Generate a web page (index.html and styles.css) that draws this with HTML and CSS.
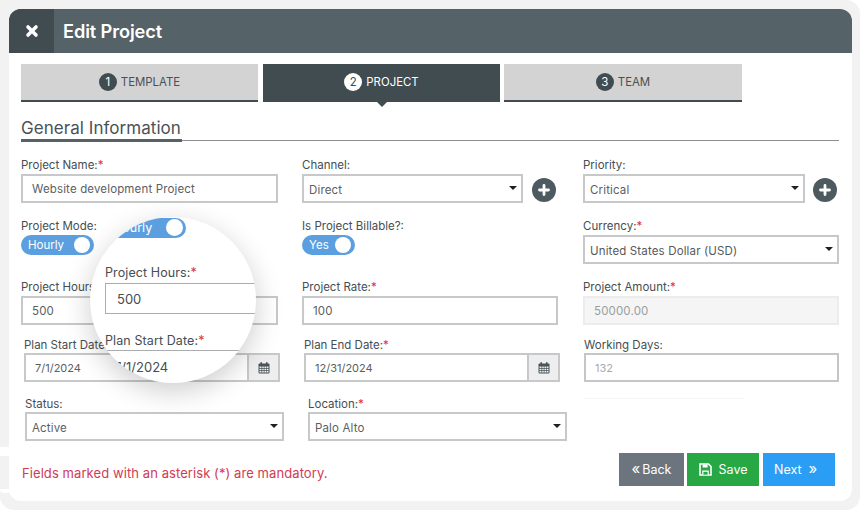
FILE: index.html
```html
<!DOCTYPE html>
<html lang="en">
<head>
<meta charset="utf-8">
<title>Edit Project</title>
<link rel="stylesheet" href="styles.css">
</head>
<body>
<div class="frame">
  <div class="gap gap-a"></div>
  <div class="gap gap-b"></div>
  <main class="card">
    <header class="head">
      <button class="close" type="button" aria-label="Close">
        <svg width="14" height="14" viewBox="0 0 14 14"><path d="M3 3 L11 11 M11 3 L3 11" stroke="#fff" stroke-width="3.6" stroke-linecap="round"/></svg>
      </button>
      <h1 class="title">Edit Project</h1>
    </header>

    <nav class="tabs">
      <div class="tab"><span class="num">1</span>TEMPLATE</div>
      <div class="tab tab-on"><span class="num">2</span>PROJECT</div>
      <div class="tab tab-last"><span class="num">3</span>TEAM</div>
    </nav>

    <h2 class="section"><span>General Information</span></h2>

    <section class="row row-1">
      <div class="f c1"><label class="lbl">Project Name:<i>*</i></label><div class="inp">Website development Project</div></div>
      <div class="f c2"><label class="lbl">Channel:</label>
        <div class="with-add"><div class="inp sel"><b>Direct</b><em class="caret"></em></div><span class="add"><svg width="12" height="12" viewBox="0 0 12 12"><path d="M6 1.5V10.5M1.5 6H10.5" stroke="#fff" stroke-width="2.8" stroke-linecap="round"/></svg></span></div></div>
      <div class="f c3"><label class="lbl">Priority:</label>
        <div class="with-add"><div class="inp sel"><b>Critical</b><em class="caret"></em></div><span class="add"><svg width="12" height="12" viewBox="0 0 12 12"><path d="M6 1.5V10.5M1.5 6H10.5" stroke="#fff" stroke-width="2.8" stroke-linecap="round"/></svg></span></div></div>
    </section>

    <section class="row row-2">
      <div class="f c1"><label class="lbl">Project Mode:</label><div class="toggle t-hourly"><span>Hourly</span><u></u></div></div>
      <div class="f c2"><label class="lbl">Is Project Billable?:</label><div class="toggle t-yes"><span>Yes</span><u></u></div></div>
      <div class="f c3"><label class="lbl">Currency:<i>*</i></label><div class="inp sel full"><b class="dark">United States Dollar (USD)</b><em class="caret"></em></div></div>
    </section>

    <section class="row row-3">
      <div class="f c1"><label class="lbl">Project Hours:<i>*</i></label><div class="inp">500</div></div>
      <div class="f c2w"><label class="lbl">Project Rate:<i>*</i></label><div class="inp">100</div></div>
      <div class="f c3"><label class="lbl">Project Amount:<i>*</i></label><div class="inp off">50000.00</div></div>
    </section>

    <section class="row row-4">
      <div class="f c1d"><label class="lbl">Plan Start Date:<i>*</i></label><div class="date"><div class="inp">7/1/2024</div><span class="cal"><svg width="12" height="12" viewBox="0 0 12 12"><use href="#cal"/></svg></span></div></div>
      <div class="f c2d"><label class="lbl">Plan End Date:<i>*</i></label><div class="date"><div class="inp">12/31/2024</div><span class="cal"><svg width="12" height="12" viewBox="0 0 12 12"><use href="#cal"/></svg></span></div></div>
      <div class="f c3d"><label class="lbl">Working Days:</label><div class="inp ro">132</div><div class="faint"></div></div>
    </section>

    <section class="row row-5">
      <div class="f c1s"><label class="lbl">Status:</label><div class="inp sel full"><b>Active</b><em class="caret"></em></div></div>
      <div class="f c2s"><label class="lbl">Location:<i>*</i></label><div class="inp sel full"><b>Palo Alto</b><em class="caret"></em></div></div>
    </section>

    <footer class="foot">
      <p class="note">Fields marked with an asterisk (*) are mandatory.</p>
      <div class="btns">
        <button class="btn b-back" type="button"><span class="chev">«</span>Back</button>
        <button class="btn b-save" type="button"><svg width="13" height="13" viewBox="0 0 13 13"><path d="M1 1H9.5L12 3.5V12H1Z" fill="none" stroke="#fff" stroke-width="1.6"/><path d="M3.6 1.5H8.6V4.6H3.6Z M3.2 7.6H9.8V11.6H3.2Z" fill="#fff"/><path d="M4.4 8.8H8.6V11.6H4.4Z" fill="#28a745"/></svg>Save</button>
        <button class="btn b-next" type="button">Next<span class="chev">»</span></button>
      </div>
    </footer>
  </main>

  <aside class="lens">
    <div class="lens-toggle"><span>Hourly</span><u></u></div>
    <label class="lens-lbl l1">Project Hours:<i>*</i></label>
    <div class="lens-inp">500</div>
    <label class="lens-lbl l2">Plan Start Date:<i>*</i></label>
    <div class="lens-date">7/1/2024</div>
  </aside>
</div>
<svg width="0" height="0" class="defs"><defs><g id="cal" fill="#4a5459"><rect x="0.5" y="1.5" width="11" height="10" rx="1"/><rect x="2.5" y="0" width="1.5" height="3" rx=".5"/><rect x="8" y="0" width="1.5" height="3" rx=".5"/><path fill="#eeeeee" d="M1.5 4.5h2v1.5h-2zM4.2 4.5h1.6v1.5H4.2zM6.4 4.5H8v1.5H6.4zM8.6 4.5h1.9v1.5H8.6zM1.5 6.8h2v1.5h-2zM4.2 6.8h1.6v1.5H4.2zM6.4 6.8H8v1.5H6.4zM8.6 6.8h1.9v1.5H8.6zM1.5 9h2v1.5h-2zM4.2 9h1.6v1.5H4.2zM6.4 9H8v1.5H6.4zM8.6 9h1.9v1.5H8.6z"/></g></defs></svg>
</body>
</html>
```
FILE: styles.css
```css
* { box-sizing: border-box; }
html, body { margin: 0; padding: 0; background: #fff; }
body { font-family: "Inter", "Liberation Sans", sans-serif; color: #474d52; }
.defs { position: absolute; }
.frame { position: relative; width: 860px; height: 510px; background: #f2f2f2; padding: 9px 8px 9px 9px; border-radius: 0 14px 14px 14px; overflow: hidden; }
.gap { position: absolute; left: 0; width: 9px; background: #fff; }
.gap-a { top: 447px; height: 9px; }
.gap-b { top: 489px; height: 4px; border-bottom-left-radius: 6px; }
.card { position: relative; height: 492px; background: #fff; border-radius: 12px; overflow: hidden; }

.head { display: flex; align-items: center; height: 44px; background: #556268; }
.close { width: 45px; height: 44px; border: 0; padding: 0; display: flex; align-items: center; justify-content: center; background: #414c51; }
.title { margin: 0 0 0 9px; font-size: 18.2px; font-weight: 600; color: #fff; letter-spacing: -.1px; }

.tabs { display: flex; margin: 11px 0 0 12px; height: 38px; width: 721px; gap: 5px; }
.tab { position: relative; flex: 0 0 237px; height: 38px; display: flex; align-items: center; justify-content: center; font-size: 11.4px; color: #4a4f53; background: #d3d3d3; border-bottom: 2px solid #414c51; }
.tab-last { flex-basis: 238px; margin-left: -1px; }
.tab-on { background: #414c51; color: #fff; }
.tab-on::after { content: ""; position: absolute; left: 50%; top: 36px; margin-left: -7px; border: 7px solid transparent; border-top-color: #414c51; border-bottom: 0; }
.num { width: 18px; height: 18px; margin-right: 4px; border-radius: 50%; display: flex; align-items: center; justify-content: center; background: #414c51; color: #fff; font-size: 11.5px; }
.tab-on .num { background: #fff; color: #414c51; }

.section { margin: 17px 13px 0 12px; height: 22px; border-bottom: 1px solid #8c8f91; font-size: 17px; font-weight: 400; line-height: 19px; color: #4a5257; }
.section span { display: inline-block; width: 161px; height: 23px; border-bottom: 3px solid #556268; white-space: nowrap; letter-spacing: .05px; }

.row { display: flex; align-items: flex-start; padding-left: 12px; }
.row-1 { margin-top: 17px; height: 61px; }
.row-2 { height: 61px; }
.row-3 { height: 57px; }
.row-4 { height: 59px; }
.row-5 { height: 40px; }

.f { flex: none; }
.c1 { width: 257px; margin-right: 24px; }
.c2 { width: 254px; margin-right: 27px; }
.c2w { width: 256px; margin-right: 25px; }
.c3 { width: 256px; }
.c1d { width: 256px; margin: 0 24px 0 3px; }
.c2d { width: 256px; margin-right: 24px; }
.c3d { width: 255px; }
.c1s { width: 259px; margin: 0 24px 0 4px; }
.c2s { width: 259px; }

.lbl { display: block; height: 16px; font-size: 11.5px; line-height: 14px; color: #474d52; white-space: nowrap; }
.lbl i { font-style: normal; color: #dc2f4b; }
.row-4 .lbl, .row-5 .lbl { line-height: 16px; }

.inp { height: 29px; border: 2px solid #c6c8ca; background: #fff; padding: 0 9px; display: flex; align-items: center; font-size: 11.5px; letter-spacing: .15px; color: #5b6064; white-space: nowrap; flex: 1; }
.sel { position: relative; padding: 2px 5px 0; }
.sel b { font-weight: 400; }
.sel b.dark { color: #55595c; }
.caret { position: absolute; right: 4px; top: 10px; border: 4px solid transparent; border-top: 4px solid #1d1f21; border-bottom: 0; }
.with-add { display: flex; align-items: center; }
.with-add .inp { flex: 0 0 222px; }
.c2 .with-add .inp { flex-basis: 221px; }
.add { flex: none; width: 24px; height: 24px; margin-left: 8px; border-radius: 50%; background: #4d5a60; display: flex; align-items: center; justify-content: center; position: relative; top: 1px; }
.c2 .add { margin-left: 9px; }
.full { width: 100%; }

.toggle { position: relative; height: 20px; border-radius: 10px; background: #5c9fe0; color: #fff; font-size: 11.5px; line-height: 21px; padding-left: 7px; }
.toggle u { position: absolute; right: 4px; top: 2px; width: 16px; height: 16px; border-radius: 50%; background: #fff; }
.t-hourly { width: 73px; }
.t-yes { width: 53px; }

.off { background: #f5f5f5; border-color: #ececec; color: #9a9ea1; }
.ro { color: #a8abad; border-color: #c4c6c8; font-size: 11px; letter-spacing: 0; }
.faint { width: 161px; height: 1px; margin-top: 16px; background: #f6f6f6; }
.date { display: flex; height: 29px; }
.date .inp { flex: 1; padding: 0 9px; font-size: 11px; letter-spacing: 0; }
.cal { flex: none; width: 31px; height: 29px; background: #eeeeee; border: 2px solid #c6c8ca; border-left: 0; display: flex; align-items: center; justify-content: center; }

.foot { display: flex; align-items: flex-start; justify-content: space-between; margin-top: 17px; padding: 0 17px 0 13px; }
.note { margin: 12px 0 0; font-size: 13px; line-height: 16px; letter-spacing: .08px; color: #d23a55; }
.btns { display: flex; gap: 3px; }
.btn { height: 33px; border: 0; padding: 0; display: flex; align-items: center; justify-content: center; gap: 5px; color: #fff; font: 400 12.5px "Inter", "Liberation Sans", sans-serif; }
.chev { font-size: 15px; line-height: 1; position: relative; top: -1px; }
.b-back { width: 65px; background: #6c757d; gap: 2px; }
.b-save { width: 72px; background: #28a745; gap: 7px; }
.b-next { width: 72px; margin-left: 1px; background: #2a9df4; gap: 7px; justify-content: flex-start; padding-left: 11px; }

.lens { position: absolute; left: 90px; top: 217px; width: 166px; height: 166px; border-radius: 50%; background: #fff; overflow: hidden; box-shadow: 0 8px 28px rgba(0,0,0,.2); z-index: 2; }
.lens-toggle { position: absolute; left: 14px; top: 1px; width: 82px; height: 20px; border-radius: 10px; background: #5c9fe0; color: #fff; font-size: 12.5px; line-height: 19px; padding-left: 9px; }
.lens-toggle u { position: absolute; right: 3px; top: 1px; width: 17px; height: 17px; border-radius: 50%; background: #fff; }
.lens-lbl { position: absolute; left: 15px; font-size: 12.5px; line-height: 14px; letter-spacing: .1px; color: #474d52; white-space: nowrap; }
.lens-lbl i { font-style: normal; color: #dc2f4b; }
.l1 { top: 49px; }
.l2 { top: 117px; }
.lens-inp { position: absolute; left: 15px; top: 66px; width: 170px; height: 31px; border: 1px solid #a9adb0; padding-left: 11px; display: flex; align-items: center; font-size: 13px; color: #474d52; }
.lens-date { position: absolute; left: 15px; top: 133px; width: 170px; height: 33px; border-top: 1px solid #a9adb0; padding-left: 9px; display: flex; align-items: center; font-size: 13px; color: #474d52; overflow: hidden; }
```
